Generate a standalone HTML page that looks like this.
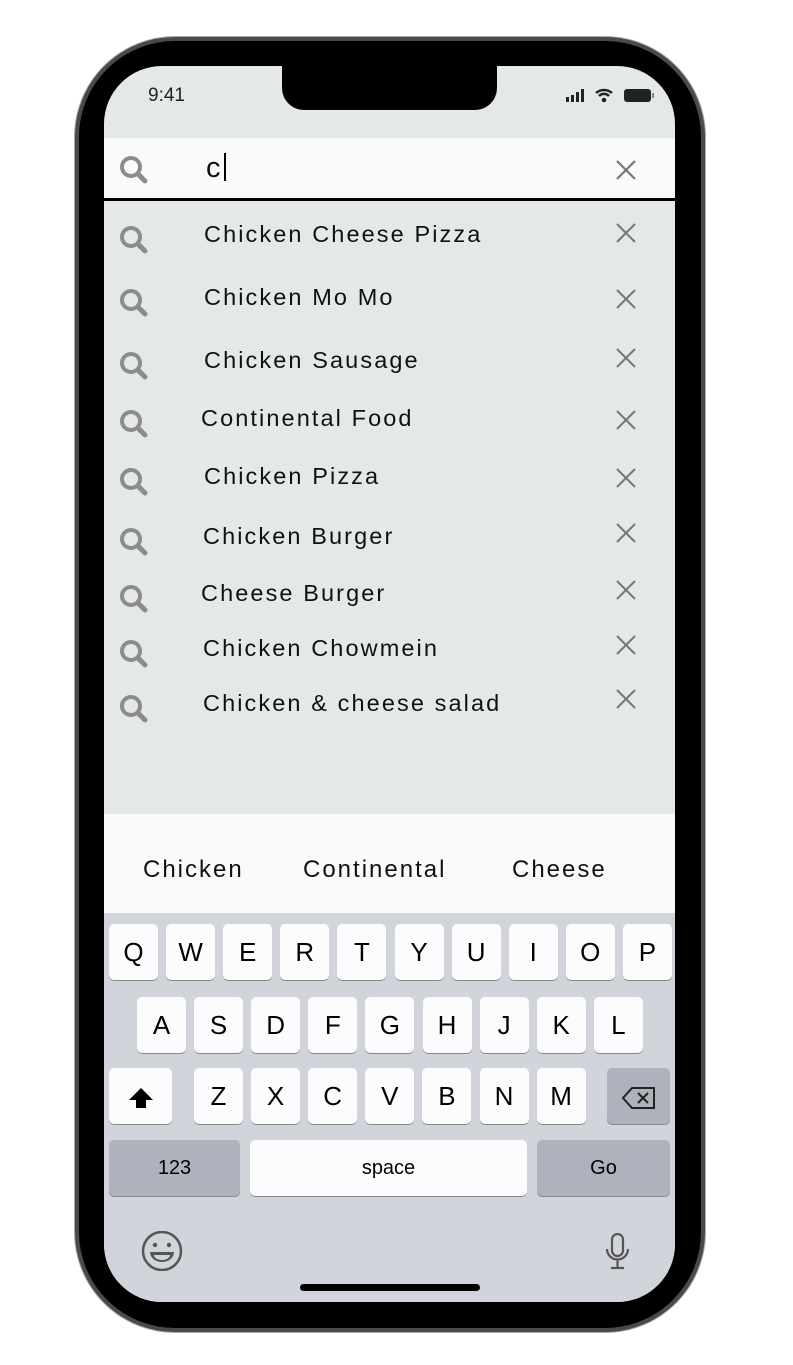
<!DOCTYPE html>
<html><head><meta charset="utf-8"><style>
*{margin:0;padding:0;box-sizing:border-box}
body{width:793px;height:1365px;background:#fff;position:relative;overflow:hidden;font-family:"Liberation Sans",sans-serif}
.abs{position:absolute}
.phone{left:75px;top:37px;width:630px;height:1295px;border-radius:100px;background:#000;border:4px solid #4a4a48;box-shadow:0 0 0 1px #aaa}
.screen{left:104px;top:66px;width:571px;height:1236px;border-radius:58px;overflow:hidden;background:#e4e9e5}
.notch{left:178px;top:0;width:215px;height:44px;background:#000;border-radius:0 0 22px 22px}
.key{position:absolute;background:#fcfcfe;border-radius:5px;box-shadow:0 1px 0 #888;font-size:26px;text-align:center;color:#000}
.gk{background:#adb2bc}
</style></head><body>
<div class="abs phone"></div>
<div class="abs screen">
 <div class="abs notch"></div>
 <div class="abs" style="left:44px;top:19px;font-size:19px;color:#222">9:41</div>
 <svg class="abs" style="left:460px;top:21px" width="92" height="18" viewBox="0 0 92 18">
  <rect x="2" y="10" width="3" height="5" fill="#222"/><rect x="7" y="8" width="3" height="7" fill="#222"/><rect x="12" y="5" width="3" height="10" fill="#222"/><rect x="17" y="2" width="3" height="13" fill="#222"/>
  <path d="M32 6a12 12 0 0 1 16 0M35 9a7 7 0 0 1 10 0" stroke="#222" stroke-width="2.5" fill="none"/><circle cx="40" cy="13" r="2.3" fill="#222"/>
  <rect x="60" y="2" width="27" height="13" rx="3" fill="#222"/><rect x="88" y="6" width="2" height="5" fill="#888"/>
 </svg>
 <div class="abs" style="left:0;top:72px;width:571px;height:60px;background:#fafafa"></div>
 <div class="abs" style="left:0;top:132px;width:571px;height:3px;background:#000"></div>
 <svg class="abs" style="left:14px;top:88px" width="32" height="32" viewBox="0 0 32 32"><circle cx="13" cy="13" r="9" stroke="#8c8c8c" stroke-width="4" fill="none"/><path d="M20 20l7 7" stroke="#8c8c8c" stroke-width="5" stroke-linecap="round"/></svg>
 <div class="abs" style="left:102px;top:86px;font-size:29px;color:#111">c<span style="display:inline-block;width:2px;height:28px;background:#000;vertical-align:-4px;margin-left:3px"></span></div>
 <svg class="abs" style="left:511px;top:93px" width="22" height="22"><path d="M2 2l18 18M20 2L2 20" stroke="#777" stroke-width="2.2"/></svg>
 <div id="list"></div>
 <div class="abs" style="left:0;top:748px;width:571px;height:99px;background:#fafafa;font-size:24px;letter-spacing:2px;color:#111">
  <span class="abs" style="left:39px;top:42px">Chicken</span>
  <span class="abs" style="left:199px;top:42px">Continental</span>
  <span class="abs" style="left:408px;top:42px">Cheese</span>
 </div>
 <div class="abs" style="left:0;top:847px;width:571px;height:389px;background:#d1d4db"></div>
 <div id="kb"></div>
 <svg class="abs" style="left:36px;top:1165px" width="44" height="40" viewBox="0 0 44 40"><circle cx="22" cy="20" r="19" stroke="#555" stroke-width="2.5" fill="none"/><circle cx="15" cy="14" r="2.2" fill="#555"/><circle cx="29" cy="14" r="2.2" fill="#555"/><path d="M10 21h24a12 10 0 0 1-24 0z" fill="#555"/><path d="M14 24h16a8 5 0 0 1-16 0z" fill="#d1d4db"/></svg>
 <svg class="abs" style="left:500px;top:1167px" width="28" height="38" viewBox="0 0 28 38"><rect x="8" y="1" width="11" height="22" rx="5.5" stroke="#555" stroke-width="2.2" fill="none"/><path d="M3 16a10.5 10.5 0 0 0 21 0M13.5 27v8M7 35h13" stroke="#555" stroke-width="2.2" fill="none"/></svg>
 <div class="abs" style="left:196px;top:1218px;width:180px;height:7px;border-radius:4px;background:#000"></div>
</div>
<script>
var items=[["Chicken Cheese Pizza",235,204,233],["Chicken Mo Mo",298,204,299],["Chicken Sausage",361,204,358],["Continental Food",419,201,420],["Chicken Pizza",477,204,478],["Chicken Burger",537,203,533],["Cheese Burger",594,201,590],["Chicken Chowmein",649,203,645],["Chicken & cheese salad",704,203,699]];
var h='';items.forEach(function(it){var y=it[1]-66;
h+='<svg class="abs" style="left:14px;top:'+(y-11)+'px" width="32" height="32" viewBox="0 0 32 32"><circle cx="13" cy="13" r="9" stroke="#8c8c8c" stroke-width="4" fill="none"/><path d="M20 20l7 7" stroke="#8c8c8c" stroke-width="5" stroke-linecap="round"/></svg>';
h+='<div class="abs" style="left:'+(it[2]-104)+'px;top:'+(y-14)+'px;font-size:23.5px;letter-spacing:2.1px;color:#111;white-space:nowrap">'+it[0].replace('&','&amp;')+'</div>';
h+='<svg class="abs" style="left:'+(512)+'px;top:'+(it[3]-66-10)+'px" width="20" height="20"><path d="M1 1l18 18M19 1L1 19" stroke="#777" stroke-width="2"/></svg>';});
document.getElementById('list').innerHTML=h;
var k='';function key(x,y,w,t,c,fs){k+='<div class="key'+(c?' gk':'')+'" style="left:'+(x-104)+'px;top:'+(y-66)+'px;width:'+w+'px;height:56px;line-height:56px;'+(fs?'font-size:'+fs+'px':'')+'">'+t+'</div>';}
"QWERTYUIOP".split('').forEach(function(c,i){key(109+i*57.1,924,49,c)});
"ASDFGHJKL".split('').forEach(function(c,i){key(137+i*57.1,997,49,c)});
key(109,1068,63,'<svg width="30" height="24" viewBox="0 0 30 24" style="vertical-align:middle"><path d="M15 2L3 14h7v8h10v-8h7z" fill="#000"/></svg>');
"ZXCVBNM".split('').forEach(function(c,i){key(194+i*57.1,1068,49,c)});
key(607,1068,63,'<svg width="36" height="24" viewBox="0 0 36 24" style="vertical-align:middle"><path d="M11 2h22v20H11L2 12z" stroke="#222" stroke-width="2" fill="none"/><path d="M17 7l10 10M27 7L17 17" stroke="#222" stroke-width="2"/></svg>',1);
key(109,1140,131,'123',1,20);key(250,1140,277,'space',0,20);key(537,1140,133,'Go',1,20);
document.getElementById('kb').innerHTML=k;
</script>
</body></html>
